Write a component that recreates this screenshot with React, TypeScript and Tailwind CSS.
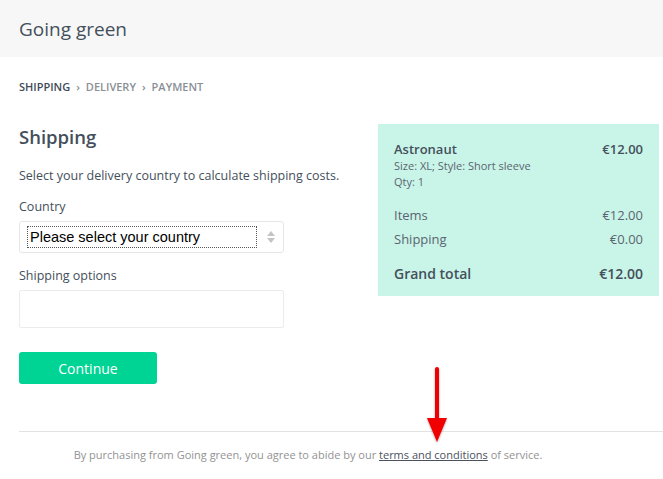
export default function App() {
  return (
    <div className="relative min-h-[479px] w-[663px] bg-white text-[#454f5b]" style={{ fontFamily: '"Open Sans", "Noto Sans", sans-serif' }}>
      <header className="h-[57px] bg-[#f7f7f7] px-[19px] flex items-center">
        <h1 className="text-[19px] leading-[28px] text-[#454f5b]">Going green</h1>
      </header>

      <nav className="mt-[22px] px-[19px] flex items-center gap-[6px] text-[11px] leading-[16px] font-semibold uppercase">
        <span className="text-[#3f4a57]">Shipping</span>
        <span className="text-[#8a8f96]">›</span>
        <span className="text-[#8a8f96]">Delivery</span>
        <span className="text-[#8a8f96]">›</span>
        <span className="text-[#8a8f96]">Payment</span>
      </nav>

      <main className="mt-[28px] pl-[19px] pr-[4px] flex justify-between items-start">
        <div className="w-[265px]">
          <h2 className="text-[18.5px] leading-[28px] font-semibold">Shipping</h2>
          <p className="mt-[15px] text-[12.5px] leading-[20px] whitespace-nowrap">Select your delivery country to calculate shipping costs.</p>
          <label className="mt-[11px] block text-[12.5px] leading-[20px]">Country</label>
          <div className="mt-[4px] h-[32px] border border-[#e6e6e6] rounded-[3px] flex items-center pl-[7px] pr-[8px]">
            <div className="flex-1 h-[22px] border border-dotted border-[#555] flex items-center px-[2px] pt-[2px] text-[14.5px] text-black" style={{ fontFamily: '"Liberation Sans", Arial, sans-serif' }}>
              Please select your country
            </div>
            <div className="ml-[10px] flex flex-col items-center gap-[2px]">
              <svg width="8" height="5" viewBox="0 0 8 5"><path d="M4 0 L8 5 L0 5 Z" fill="#c4c4c4" /></svg>
              <svg width="8" height="5" viewBox="0 0 8 5"><path d="M0 0 L8 0 L4 5 Z" fill="#c4c4c4" /></svg>
            </div>
          </div>
          <label className="mt-[13px] block text-[12.5px] leading-[20px]">Shipping options</label>
          <div className="mt-[4px] h-[38px] border border-[#ececec] rounded-[2px]" />
          <button className="mt-[24px] w-[138px] h-[32px] bg-[#00d494] rounded-[3px] text-white text-[14px]">Continue</button>
        </div>

        <aside className="mt-[1px] w-[281px] h-[172px] bg-[#c9f5e8] px-[16px] pt-[16px]">
          <div className="flex justify-between text-[13px] leading-[18px] font-semibold">
            <span>Astronaut</span>
            <span>€12.00</span>
          </div>
          <p className="text-[11px] leading-[16px] text-[#5b6470]">Size: XL; Style: Short sleeve</p>
          <p className="text-[11px] leading-[16px] text-[#5b6470]">Qty: 1</p>
          <div className="mt-[15px] flex justify-between text-[13px] leading-[20px] text-[#5b6470]">
            <span>Items</span>
            <span>€12.00</span>
          </div>
          <div className="mt-[4px] flex justify-between text-[13px] leading-[20px] text-[#5b6470]">
            <span>Shipping</span>
            <span>€0.00</span>
          </div>
          <div className="mt-[15px] flex justify-between text-[14px] leading-[20px] font-semibold">
            <span>Grand total</span>
            <span>€12.00</span>
          </div>
        </aside>
      </main>

      <footer className="mt-[47px] ml-[19px] border-t border-[#e2e2e2] pt-[15px] pr-[66px] text-center text-[11px] leading-[16px] text-[#939393]">
        By purchasing from Going green, you agree to abide by our{' '}
        <a className="text-[#4a5260] underline">terms and conditions</a> of service.
      </footer>

      <svg className="absolute left-[424px] top-[364px]" width="28" height="82" viewBox="0 0 28 82">
        <defs>
          <filter id="sh" x="-50%" y="-20%" width="200%" height="140%">
            <feDropShadow dx="0" dy="1" stdDeviation="1" floodColor="#000" floodOpacity="0.35" />
          </filter>
        </defs>
        <g filter="url(#sh)">
          <line x1="13" y1="5" x2="13" y2="56" stroke="#f00000" strokeWidth="4" strokeLinecap="round" />
          <path d="M3 54 L23 54 L13 78 Z" fill="#f00000" />
        </g>
      </svg>
    </div>
  )
}
